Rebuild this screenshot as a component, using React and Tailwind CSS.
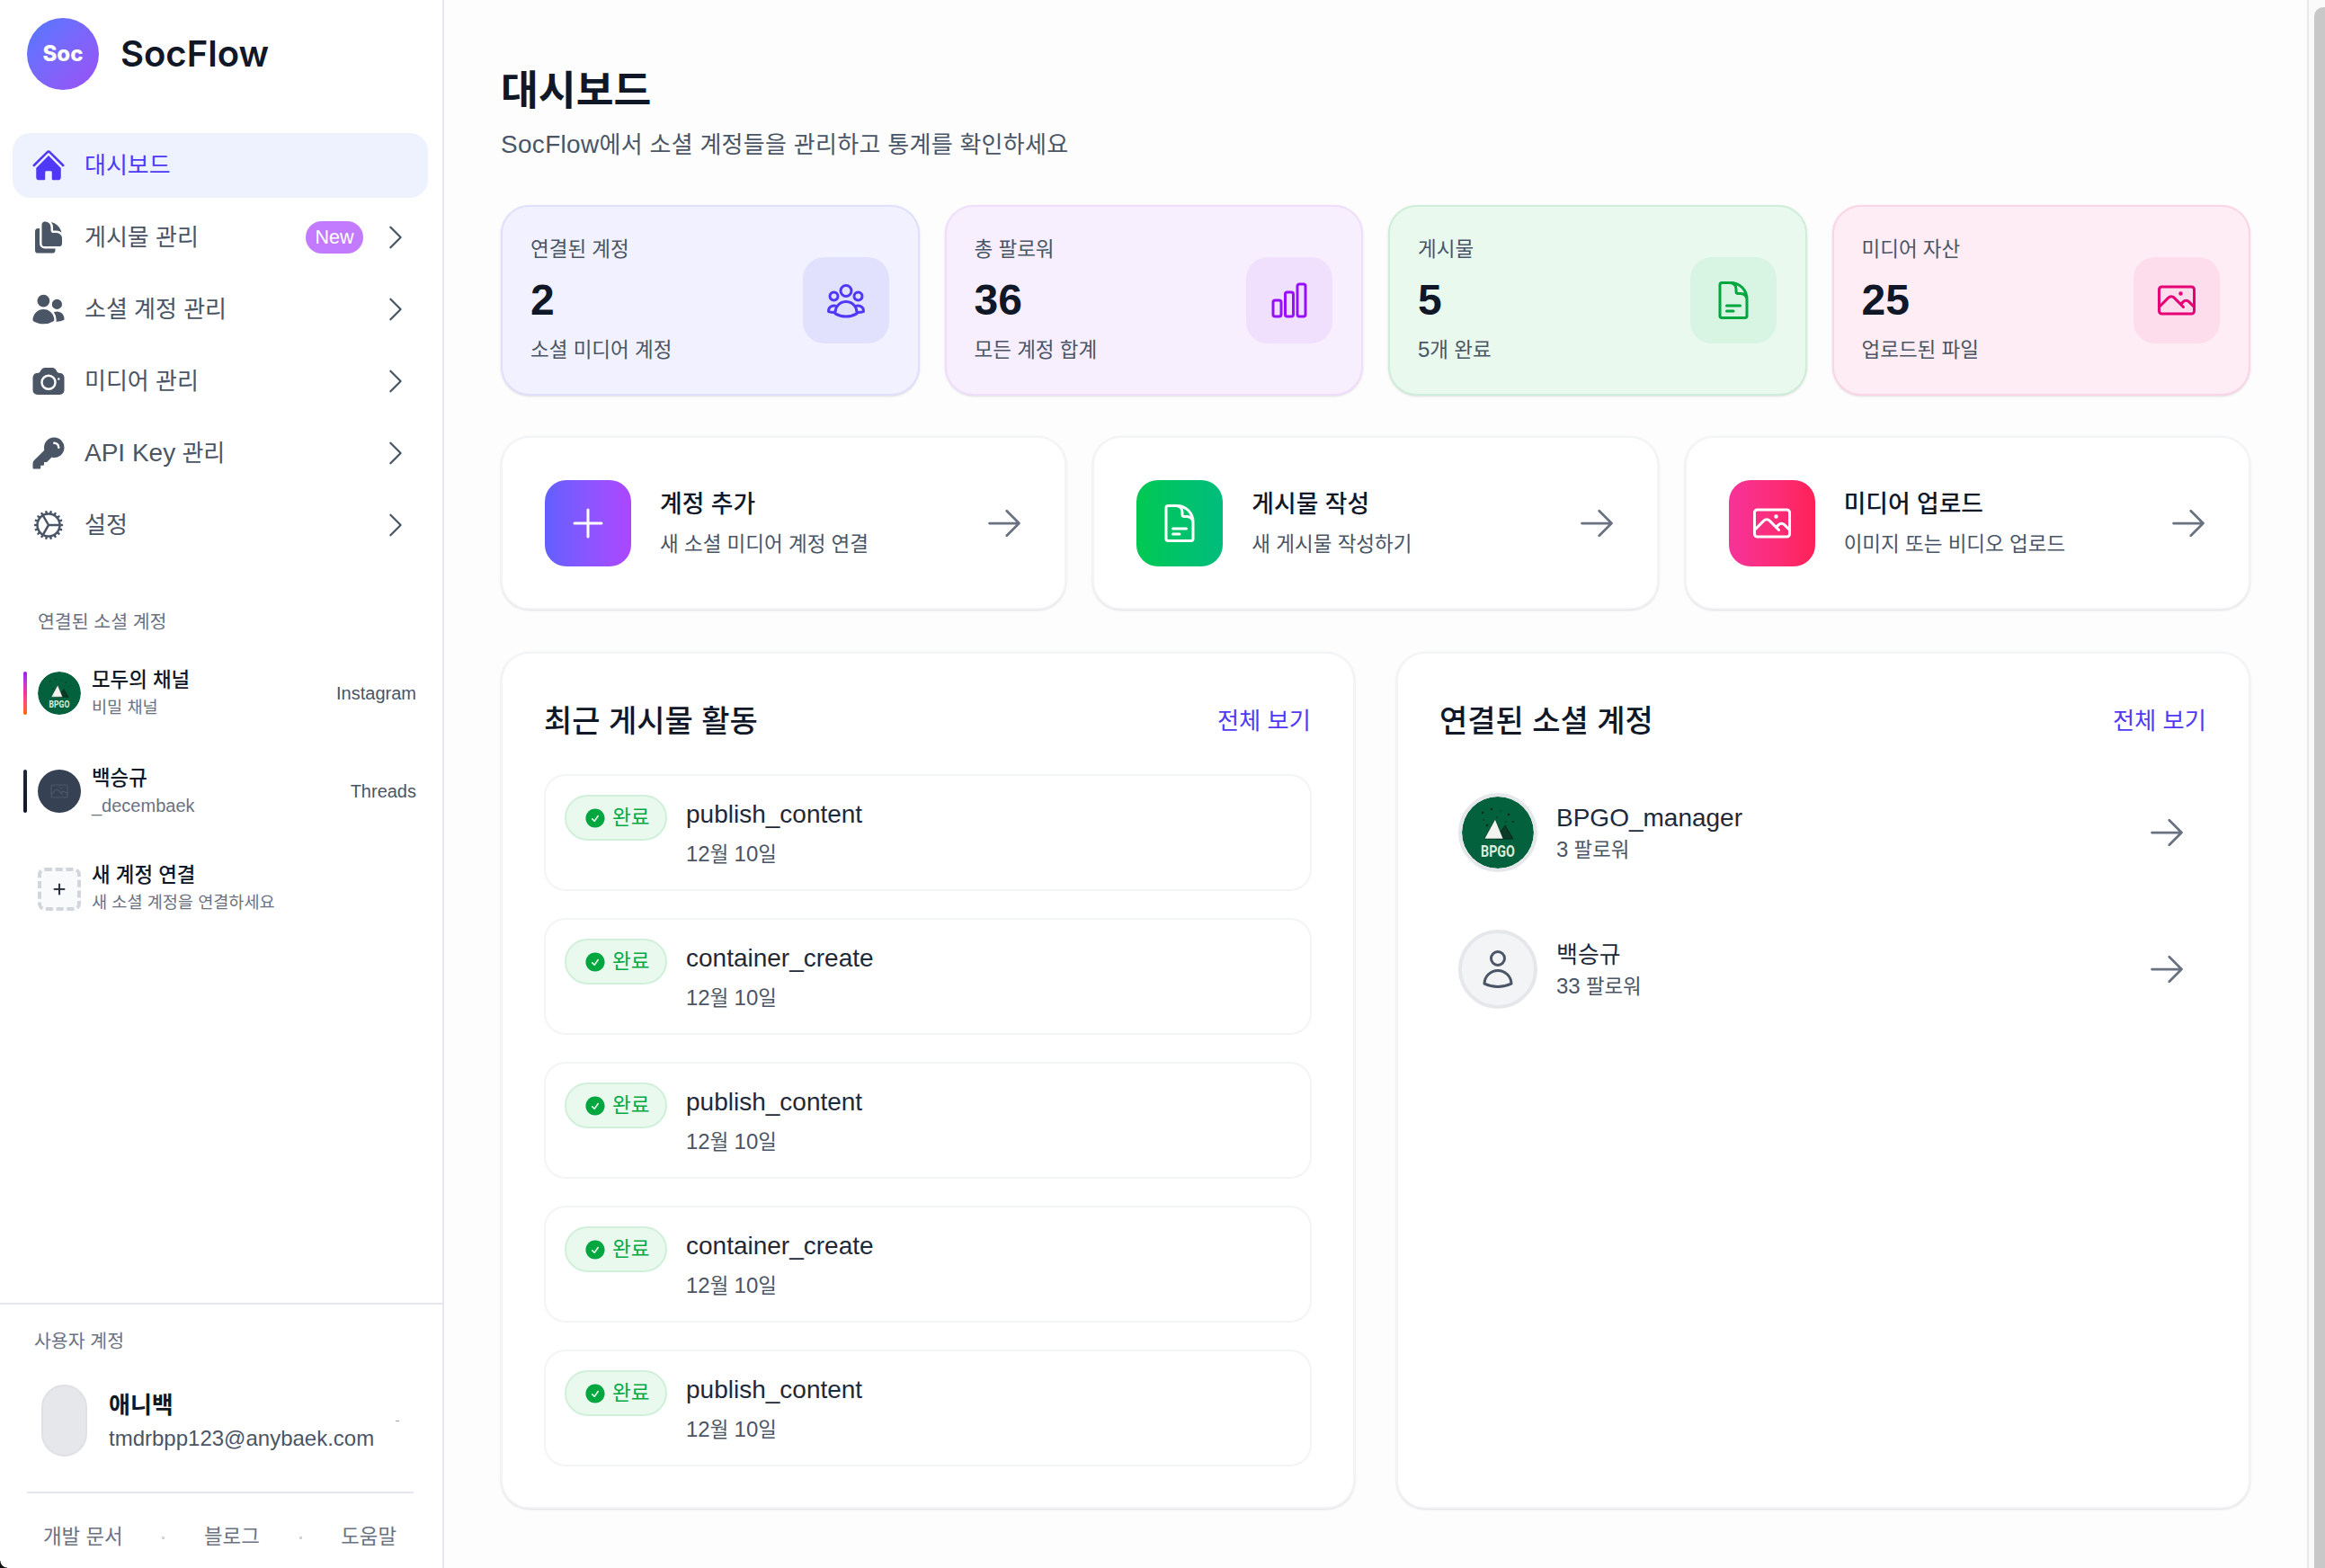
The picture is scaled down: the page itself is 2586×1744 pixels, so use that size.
import React from "react";
import {
  HiHome, HiDocumentDuplicate, HiUsers, HiCamera, HiKey, HiCheckCircle,
  HiOutlineCog, HiOutlineChevronRight, HiOutlineArrowRight, HiOutlineUserGroup,
  HiOutlineChartBar, HiOutlineDocumentText, HiOutlinePhoto, HiOutlinePlus, HiOutlineUser, HiPlus,
} from "react-icons/hi2";

const FONT = "font-['Liberation_Sans','Noto_Sans_CJK_KR',sans-serif]";

function BpgoLogo({ size }) {
  return (
    <svg width={size} height={size} viewBox="0 0 80 80" className="block rounded-full shrink-0">
      <circle cx="40" cy="40" r="40" fill="#04613d" />
      <g fill="#06291c">
        <circle cx="23" cy="18" r="1.2" /><circle cx="33" cy="14" r="1.2" /><circle cx="43" cy="16" r="0.8" />
        <circle cx="52" cy="20" r="1.2" /><circle cx="24" cy="26" r="0.8" /><circle cx="28" cy="32" r="1.2" />
        <circle cx="57" cy="28" r="1" /><circle cx="49" cy="28" r="0.8" /><circle cx="39" cy="23" r="0.8" />
      </g>
      <polygon points="48,32 38,47 57,47" fill="#0a3a28" stroke="#06291c" strokeWidth="1" />
      <polygon points="37,25 25,47 46,47" fill="#f4f4f0" stroke="#06291c" strokeWidth="0.6" />
      <text x="40" y="67" textAnchor="middle" textLength="38" lengthAdjust="spacingAndGlyphs" fontFamily="Roboto, sans-serif" fontWeight="700" fontSize="19" fill="#d9ecdc">BPGO</text>
    </svg>
  );
}

const nav = [
  { label: "게시물 관리", Icon: HiDocumentDuplicate, badge: true },
  { label: "소셜 계정 관리", Icon: HiUsers },
  { label: "미디어 관리", Icon: HiCamera },
  { label: <><span className="text-[28px]">API Key</span> 관리</>, Icon: HiKey },
  { label: "설정", Icon: HiOutlineCog },
];

const Digits = ({ children }) => <span className="text-[24px] leading-none">{children}</span>;

const stats = [
  { label: "연결된 계정", value: "2", desc: "소셜 미디어 계정", Icon: HiOutlineUserGroup, card: "bg-[#f2f1ff] border-[#e0e0fe]", box: "bg-[#e1e1fe]", icon: "text-indigo-600" },
  { label: "총 팔로워", value: "36", desc: "모든 계정 합계", Icon: HiOutlineChartBar, card: "bg-[#f7effe] border-[#f0defc]", box: "bg-[#f0e0fd]", icon: "text-purple-600" },
  { label: "게시물", value: "5", desc: <><Digits>5</Digits>개 완료</>, Icon: HiOutlineDocumentText, card: "bg-[#e9f9ee] border-[#cfeed9]", box: "bg-[#d8f4e2]", icon: "text-green-600" },
  { label: "미디어 자산", value: "25", desc: "업로드된 파일", Icon: HiOutlinePhoto, card: "bg-[#feedf5] border-[#fbd5e6]", box: "bg-[#fddcec]", icon: "text-pink-600" },
];

const actions = [
  { title: "계정 추가", sub: "새 소셜 미디어 계정 연결", Icon: HiOutlinePlus, box: "from-indigo-500 to-purple-500" },
  { title: "게시물 작성", sub: "새 게시물 작성하기", Icon: HiOutlineDocumentText, box: "from-green-500 to-emerald-500" },
  { title: "미디어 업로드", sub: "이미지 또는 비디오 업로드", Icon: HiOutlinePhoto, box: "from-pink-500 to-rose-500" },
];

const posts = ["publish_content", "container_create", "publish_content", "container_create", "publish_content"];

function PanelHeader({ title }) {
  return (
    <div className="flex items-center justify-between h-[48px]">
      <h2 className="text-[34px] leading-[48px] font-medium text-gray-900">{title}</h2>
      <span className="mr-[1px] text-[26.3px] leading-[48px] text-indigo-600">전체 보기</span>
    </div>
  );
}

export default function App() {
  return (
    <div className={`${FONT} relative flex w-[2586px] h-[1744px] overflow-hidden bg-[#fdfdfd]`}>
      <aside className="flex flex-col w-[494px] h-full shrink-0 bg-white border-r-2 border-[#e6e7ee]">
        <div className="flex items-center gap-[24px] pl-[30px] pt-[20px] font-['Inter',sans-serif]">
          <div className="flex items-center justify-center w-[80px] h-[80px] rounded-full bg-linear-to-br from-[#4f78ff] to-[#9a4ff5] text-white text-[24px] font-extrabold">Soc</div>
          <span className="text-[40px] leading-[80px] font-semibold text-gray-900">SocFlow</span>
        </div>

        <nav className="flex flex-col gap-[8px] mt-[48px] ml-[14px] w-[462px]">
          <div className="flex items-center gap-[20px] h-[72px] pl-[20px] rounded-[20px] bg-indigo-50 text-indigo-600">
            <HiHome size={40} className="shrink-0" />
            <span className="text-[26px]">대시보드</span>
          </div>
          {nav.map(({ label, Icon, badge }, i) => (
            <div key={i} className="flex items-center h-[72px] pl-[20px] pr-[18px] text-gray-600">
              <Icon size={40} className="shrink-0" />
              <span className="ml-[20px] flex-1 text-[26px]">{label}</span>
              {badge && <span className="flex items-center justify-center w-[64px] h-[36px] mr-[18px] rounded-full bg-purple-400 text-white text-[21.5px]">New</span>}
              <HiOutlineChevronRight size={36} className="shrink-0" />
            </div>
          ))}
        </nav>

        <div className="mt-[57px] pl-[42px] text-[20.5px] leading-[30px] text-gray-500">연결된 소셜 계정</div>

        <div className="flex flex-col gap-[61px] mt-[40px] pl-[26px] pr-[29px]">
          <div className="flex items-center h-[48px]">
            <div className="w-[4px] h-[48px] rounded-full bg-linear-to-b from-purple-600 via-pink-500 to-orange-500" />
            <div className="ml-[12px]"><BpgoLogo size={48} /></div>
            <div className="ml-[12px] flex-1 pt-[2px]">
              <div className="text-[22.4px] leading-[30px] font-medium text-gray-900">모두의 채널</div>
              <div className="text-[18.6px] leading-[30px] text-gray-500">비밀 채널</div>
            </div>
            <span className="text-[20px] text-gray-600">Instagram</span>
          </div>
          <div className="flex items-center h-[48px]">
            <div className="w-[4px] h-[48px] rounded-full bg-linear-to-b from-gray-800 to-gray-900" />
            <div className="ml-[12px] flex items-center justify-center w-[48px] h-[48px] rounded-full bg-gray-700 text-gray-600"><HiOutlinePhoto size={22} /></div>
            <div className="ml-[12px] flex-1 pt-[2px]">
              <div className="text-[22.4px] leading-[30px] font-medium text-gray-900">백승규</div>
              <div className="text-[20px] leading-[30px] text-gray-500">_decembaek</div>
            </div>
            <span className="text-[20px] text-gray-600">Threads</span>
          </div>
          <div className="flex items-center h-[48px] pl-[16px]">
            <div className="flex items-center justify-center w-[48px] h-[48px] rounded-[8px] border-4 border-dashed border-gray-300 bg-gray-50 text-gray-900"><HiPlus size={18} stroke="currentColor" strokeWidth={1} /></div>
            <div className="ml-[12px] flex-1">
              <div className="text-[22.4px] leading-[30px] font-medium text-gray-900">새 계정 연결</div>
              <div className="text-[18.6px] leading-[30px] text-gray-500">새 소셜 계정을 연결하세요</div>
            </div>
          </div>
        </div>

        <div className="mt-auto h-[295px] border-t-2 border-[#e6e7ee]">
          <div className="mt-[26px] pl-[38px] text-[20.5px] leading-[30px] text-gray-500">사용자 계정</div>
          <div className="flex items-center h-[80px] mt-[33px] pl-[46px] pr-[48px]">
            <div className="w-[51px] h-[80px] shrink-0 rounded-full bg-gray-200 border-2 border-[#e0e0e6]" />
            <div className="ml-[24px] flex-1 pt-[4px]">
              <div className="text-[26px] leading-[36px] font-bold text-gray-900">애니백</div>
              <div className="text-[24px] leading-[38px] text-gray-600">tmdrbpp123@anybaek.com</div>
            </div>
            <div className="w-[4px] h-[1px] bg-gray-400" />
          </div>
          <div className="mt-[39px] mx-[30px] h-[2px] w-[430px] bg-[#e6e7ee]" />
          <div className="flex items-center justify-between mt-[34px] pl-[48px] pr-[51px] text-[22.4px] leading-[30px] text-gray-500">
            <span>개발 문서</span>
            <span className="w-[3px] h-[3px] bg-gray-300" />
            <span>블로그</span>
            <span className="w-[3px] h-[3px] bg-gray-300" />
            <span>도움말</span>
          </div>
        </div>
      </aside>

      <main className="flex-1 pl-[63px] pr-[63px] pt-[72px]">
        <h1 className="text-[45.5px] leading-[60px] font-bold text-gray-900">대시보드</h1>
        <p className="mt-[9px] text-[26px] leading-[40px] tracking-[0.3px] text-gray-600"><span className="text-[28px]">SocFlow</span>에서 소셜 계정들을 관리하고 통계를 확인하세요</p>

        <div className="grid grid-cols-4 gap-[28px] mt-[47px]">
          {stats.map(({ label, value, desc, Icon, card, box, icon }) => (
            <div key={label} className={`flex items-center justify-between h-[212px] pl-[31px] pr-[32px] rounded-[32px] border-2 shadow-sm ${card}`}>
              <div>
                <div className="text-[22.5px] leading-[56px] text-gray-600">{label}</div>
                <div className="text-[48px] leading-[56px] font-bold text-gray-900">{value}</div>
                <div className="text-[22.5px] leading-[56px] text-gray-600">{desc}</div>
              </div>
              <div className={`flex items-center justify-center w-[96px] h-[96px] rounded-[24px] ${box} ${icon}`}><Icon size={48} /></div>
            </div>
          ))}
        </div>

        <div className="grid grid-cols-3 gap-[29px] mt-[45px]">
          {actions.map(({ title, sub, Icon, box }) => (
            <div key={title} className="flex items-center h-[193px] pl-[47px] pr-[45px] rounded-[32px] border-2 border-gray-100 bg-white shadow-sm">
              <div className={`flex items-center justify-center w-[96px] h-[96px] rounded-[24px] bg-linear-to-r text-white ${box}`}><Icon size={48} /></div>
              <div className="ml-[32px] flex-1 pt-[4px]">
                <div className="text-[26.8px] leading-[44px] font-medium text-gray-900">{title}</div>
                <div className="text-[22.5px] leading-[46px] text-gray-600">{sub}</div>
              </div>
              <HiOutlineArrowRight size={44} className="text-gray-500" />
            </div>
          ))}
        </div>

        <div className="flex gap-[46px] mt-[47px]">
          <section className="flex-1 h-[953px] px-[46px] pt-[51px] rounded-[32px] border-2 border-gray-100 bg-white shadow-sm">
            <PanelHeader title="최근 게시물 활동" />
            <div className="flex flex-col gap-[30px] mt-[35px]">
              {posts.map((p, i) => (
                <div key={i} className="flex items-start h-[130px] pl-[21px] pt-[21px] rounded-[24px] border-2 border-gray-100 bg-white">
                  <span className="flex items-center gap-[6px] h-[51px] w-[114px] pl-[19px] rounded-full bg-[#e9f9ee] border-2 border-[#d0f0da] text-[22.5px] text-green-600">
                    <HiCheckCircle size={26} className="shrink-0" />완료
                  </span>
                  <div className="ml-[21px] pt-[1px]">
                    <div className="text-[28px] leading-[42px] text-gray-800">{p}</div>
                    <div className="text-[22.4px] leading-[47px] text-gray-600"><Digits>12</Digits>월 <Digits>10</Digits>일</div>
                  </div>
                </div>
              ))}
            </div>
          </section>

          <section className="flex-1 h-[953px] px-[46px] pt-[51px] rounded-[32px] border-2 border-gray-100 bg-white shadow-sm">
            <PanelHeader title="연결된 소셜 계정" />
            <div className="flex flex-col gap-[64px] mt-[56px] pl-[21px] pr-[23px]">
              <div className="flex items-center h-[88px]">
                <div className="rounded-full border-4 border-gray-200"><BpgoLogo size={80} /></div>
                <div className="ml-[21px] flex-1 pt-[3px]">
                  <div className="text-[28px] leading-[36px] text-gray-800">BPGO_manager</div>
                  <div className="text-[22.4px] leading-[36px] text-gray-600"><Digits>3</Digits> 팔로워</div>
                </div>
                <HiOutlineArrowRight size={44} className="text-gray-500" />
              </div>
              <div className="flex items-center h-[88px]">
                <div className="flex items-center justify-center w-[88px] h-[88px] rounded-full border-4 border-gray-200 bg-gray-100 text-gray-600"><HiOutlineUser size={48} /></div>
                <div className="ml-[21px] flex-1 pt-[3px]">
                  <div className="text-[26px] leading-[36px] text-gray-800">백승규</div>
                  <div className="text-[22.4px] leading-[36px] text-gray-600"><Digits>33</Digits> 팔로워</div>
                </div>
                <HiOutlineArrowRight size={44} className="text-gray-500" />
              </div>
            </div>
          </section>
        </div>
      </main>

      <div className="flex w-[20px] h-full shrink-0 border-l-2 border-[#e8e8e8] bg-[#fafafa]">
        <div className="ml-[6px] mt-[8px] w-[12px] rounded-tl-[10px] bg-[#c8c8c8]" />
      </div>

      <div className="absolute left-0 bottom-0 w-[8px] h-[8px] bg-[radial-gradient(circle_at_100%_0%,transparent_7px,#111_8px)]" />
    </div>
  );
}
